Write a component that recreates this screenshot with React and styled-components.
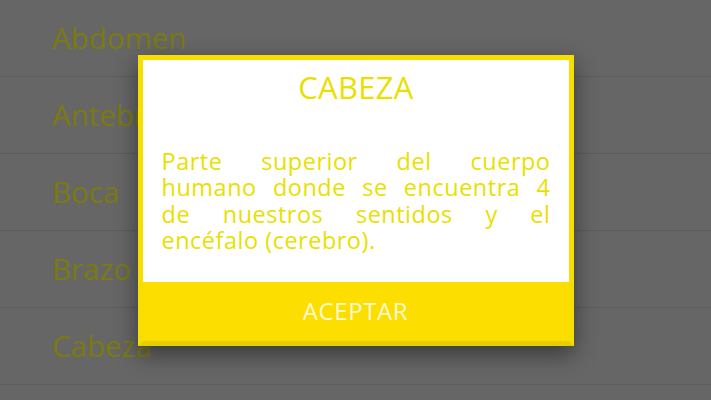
import React from 'react';
import styled, { createGlobalStyle } from 'styled-components';

const GlobalStyle = createGlobalStyle`
  html, body {
    margin: 0;
    padding: 0;
    width: 100%;
    height: 100%;
    overflow: hidden;
    background: #aaa;
  }
`;

const Screen = styled.div`
  position: relative;
  width: 711px;
  height: 400px;
  overflow: hidden;
  background: #aaa;
  font-family: 'Open Sans', 'Noto Sans', sans-serif;
`;

const List = styled.ul`
  list-style: none;
  margin: 0;
  padding: 0;
`;

const Row = styled.li`
  box-sizing: border-box;
  height: 77px;
  display: flex;
  align-items: center;
  padding: 0 0 2px 52px;
  border-bottom: 1px solid #999;
  font-size: 29.5px;
  color: #cecb1c;
`;

const Overlay = styled.div`
  position: absolute;
  inset: 0;
  background: rgba(0, 0, 0, 0.4);
  display: flex;
  align-items: center;
  justify-content: center;
`;

const Dialog = styled.div`
  width: 426px;
  border: 5px solid #f6df00;
  border-bottom-color: #e6cf00;
  background: #fff;
  box-shadow: 0 8px 22px rgba(0, 0, 0, 0.45);
  display: flex;
  flex-direction: column;
`;

const Body = styled.div`
  padding: 9px 18px 28px 19px;
`;

const Title = styled.h2`
  margin: 0 0 43px;
  font-size: 31px;
  line-height: 36px;
  font-weight: 400;
  text-align: center;
  letter-spacing: 0.3px;
  color: #e9df00;
`;

const Message = styled.p`
  margin: 0;
  font-size: 23.5px;
  line-height: 26.5px;
  letter-spacing: 0.5px;
  color: #e9df00;
`;

// each wrapped line is spread to the full width, the last one stays left
const Line = styled.span`
  display: block;
  text-align: ${(p) => (p.$last ? 'left' : 'justify')};
  text-align-last: ${(p) => (p.$last ? 'left' : 'justify')};
`;

const Button = styled.button`
  height: 59px;
  border: 0;
  padding: 0 0 2px;
  background: #fcde00;
  color: #fff9cf;
  font-family: inherit;
  font-size: 24px;
  letter-spacing: 0.6px;
  cursor: pointer;
`;

const parts = ['Abdomen', 'Antebrazo', 'Boca', 'Brazo', 'Cabeza'];

const lines = [
  'Parte superior del cuerpo',
  'humano donde se encuentra 4',
  'de nuestros sentidos y el',
  'encéfalo (cerebro).',
];

export default function App() {
  return (
    <Screen>
      <GlobalStyle />
      <List>
        {parts.map((p) => (
          <Row key={p}>{p}</Row>
        ))}
      </List>
      <Overlay>
        <Dialog>
          <Body>
            <Title>CABEZA</Title>
            <Message>
              {lines.map((l, i) => (
                <Line key={i} $last={i === lines.length - 1}>
                  {l}
                </Line>
              ))}
            </Message>
          </Body>
          <Button>ACEPTAR</Button>
        </Dialog>
      </Overlay>
    </Screen>
  );
}
